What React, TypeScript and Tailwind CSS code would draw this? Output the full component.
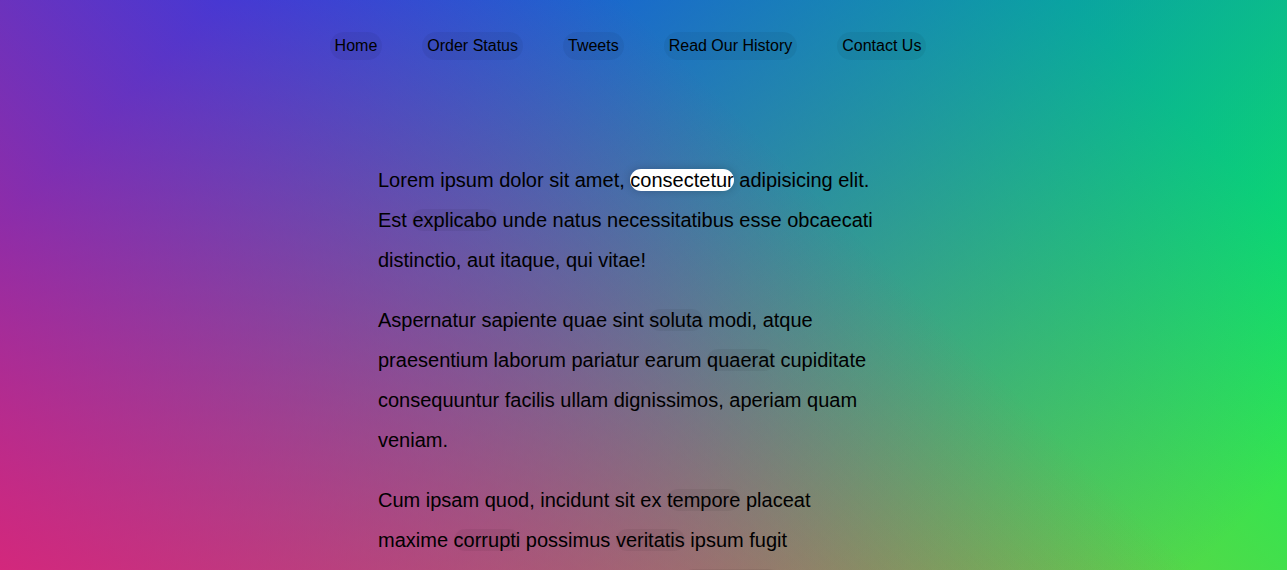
import React from 'react';

const menu = ['Home', 'Order Status', 'Tweets', 'Read Our History', 'Contact Us'];

type Part = string | { link: string; active?: boolean };

const paragraphs: Part[][] = [
  ['Lorem ipsum dolor sit amet, ', { link: 'consectetur', active: true }, ' adipisicing elit. Est ', { link: 'explicabo' }, ' unde natus necessitatibus esse obcaecati distinctio, aut itaque, qui vitae!'],
  ['Aspernatur sapiente quae sint ', { link: 'soluta' }, ' modi, atque praesentium laborum pariatur earum ', { link: 'quaerat' }, ' cupiditate consequuntur facilis ullam dignissimos, aperiam quam veniam.'],
  ['Cum ipsam quod, incidunt sit ex ', { link: 'tempore' }, ' placeat maxime ', { link: 'corrupti' }, ' possimus ', { link: 'veritatis' }, ' ipsum fugit recusandae est doloremque? Hic, ', { link: 'quibusdam' }, ', nulla.'],
  ['Esse quibusdam, ad, ducimus cupiditate ', { link: 'nulla' }, ', quae magni odit ', { link: 'totam' }, ' ut consequatur eveniet sunt quam provident sapiente dicta neque quod.'],
  ['Aliquam ', { link: 'dicta' }, ' sequi culpa fugiat ', { link: 'consequuntur' }, ' pariatur optio ad minima, maxime ', { link: 'odio' }, ', distinctio magni impedit tempore enim repellendus ', { link: 'repudiandae' }, ' quas!'],
];

const App = () => {
  return (
    <div className="min-h-screen text-black font-['Liberation_Sans',Arial,sans-serif] bg-[linear-gradient(45deg,hsla(340,100%,55%,1)_0%,hsla(340,100%,55%,0)_70%),linear-gradient(135deg,hsla(225,95%,50%,1)_10%,hsla(225,95%,50%,0)_80%),linear-gradient(225deg,hsla(140,90%,50%,1)_10%,hsla(140,90%,50%,0)_80%),linear-gradient(315deg,hsla(35,95%,55%,1)_100%,hsla(35,95%,55%,0)_70%)]">
      <div className="w-[1256px] pb-5">
        {/* Menu */}
        <nav className="pt-[32px]">
          <ul className="flex justify-center text-[16px] leading-[normal]">
            {menu.map(item => (
              <li key={item}>
                <a href="#" className="inline-block p-[5px] mx-5 rounded-[20px] bg-black/5 text-black">
                  {item}
                </a>
              </li>
            ))}
          </ul>
        </nav>

        {/* Text */}
        <div className="mx-auto max-w-[500px] pt-[100px] text-[20px] leading-[2]">
          {paragraphs.map((parts, i) => (
            <p key={i} className="mb-5">
              {parts.map((part, j) =>
                typeof part === 'string' ? (
                  <React.Fragment key={j}>{part}</React.Fragment>
                ) : (
                  <a
                    key={j}
                    href="#"
                    className={
                      part.active
                        ? 'rounded-[20px] bg-white shadow-[0_0_10px_rgba(0,0,0,0.2)] text-black'
                        : 'rounded-[20px] bg-black/5 text-black'
                    }
                  >
                    {part.link}
                  </a>
                )
              )}
            </p>
          ))}
        </div>
      </div>
    </div>
  );
};

export default App;
